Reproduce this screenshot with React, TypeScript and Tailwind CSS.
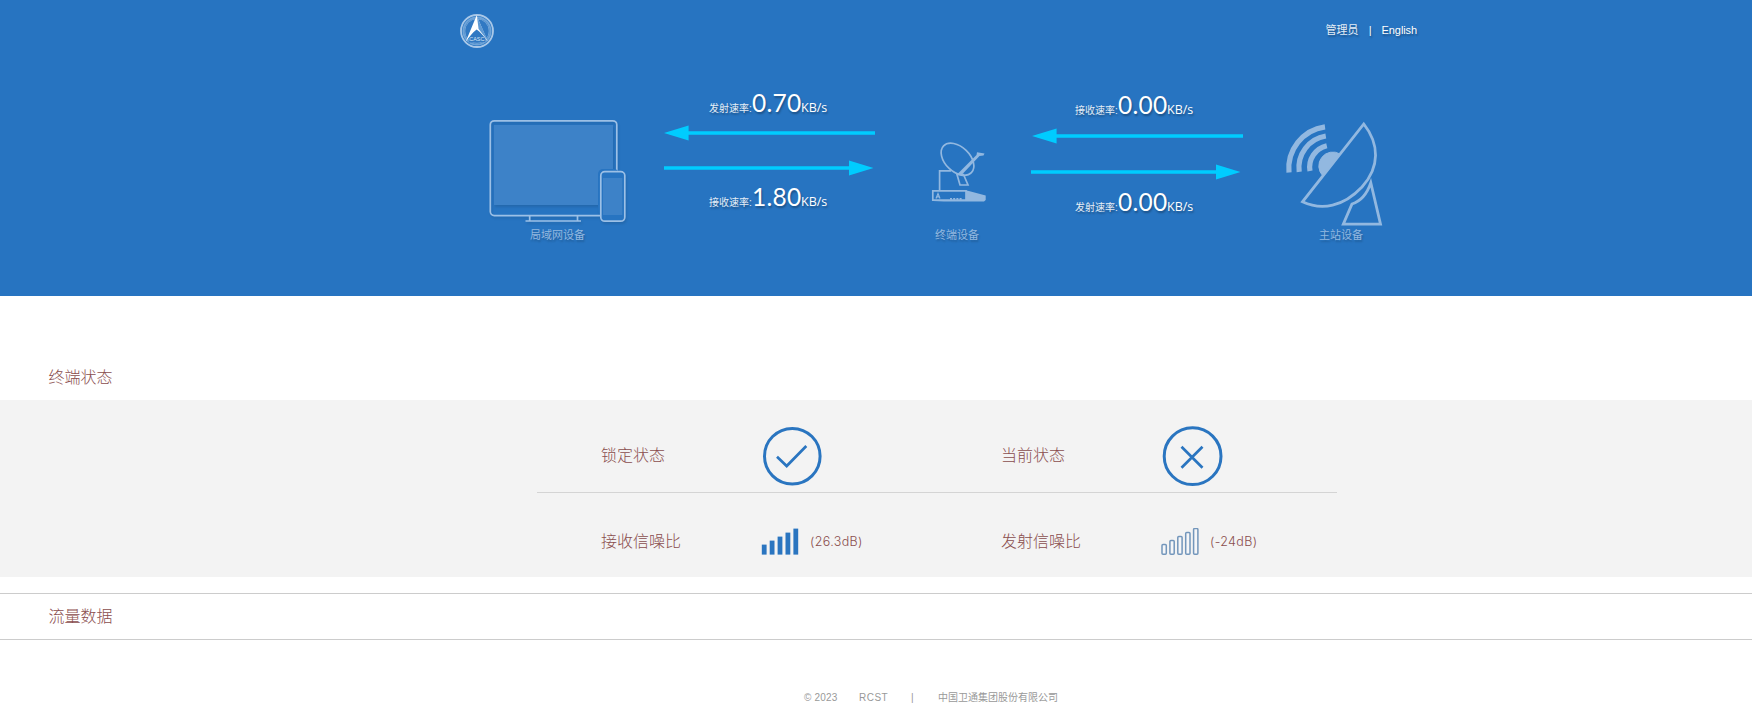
import React from "react";

const LINE = "#92b8e0";
const BLUE = "#2774c1";

function Logo() {
  return (
    <svg width="36" height="36" viewBox="0 0 36 36" className="mt-px block">
      <circle cx="18" cy="18" r="16" fill="none" stroke="#a9c8e8" strokeWidth="1.8" />
      <circle cx="18" cy="18" r="13.6" fill="none" stroke="#6fa4d8" strokeWidth="2" />
      <circle cx="18" cy="18" r="12.2" fill="#3179c3" stroke="#8db6e0" strokeWidth="0.7" />
      <path d="M17.6 2.5 L6.6 29 Q13 20 17.6 16.6 Q22 19.5 28.8 28.5 Z" fill="#ffffff" />
      <path d="M17.6 19.2 Q12.4 22.5 9.4 29.6 L26.6 29 Q22.5 22 17.6 19.2 Z" fill="#3179c3" />
      <path d="M18 3.6 L19.6 16 L29 28 Z" fill="#5f9ad4" />
      <text x="17.8" y="27.8" textAnchor="middle" fontSize="5.4" fill="#dbe8f6" fontFamily="Liberation Sans, sans-serif">
        CASC
      </text>
    </svg>
  );
}

function LanDevice() {
  return (
    <svg width="160" height="116" viewBox="480 110 160 116" className="block drop-shadow-[1px_2px_1px_rgba(0,0,0,0.1)]" fill="none" stroke="#9cc0e6" strokeWidth="1.7">
      <rect x="490.3" y="120.8" width="126.5" height="94.8" rx="4" />
      <rect x="494" y="125" width="119" height="80" fill="#3d82c8" stroke="none" />
      <path d="M529.7 216 V221 M577.5 216 V221 M525.5 221 H581" />
      <rect x="598" y="169" width="21" height="46" rx="5" fill={BLUE} stroke="none" />
      <rect x="600.8" y="171.6" width="24" height="49.6" rx="4" fill={BLUE} />
      <rect x="603" y="178" width="19.3" height="37" fill="#3d82c8" stroke="none" />
    </svg>
  );
}

function Terminal() {
  return (
    <svg width="60" height="66" viewBox="930 138 60 66" className="block" fill="none" stroke={LINE} strokeWidth="1.7">
      <ellipse cx="957.5" cy="158.3" rx="19.3" ry="12.4" transform="rotate(44 957.5 158.3)" />
      <path d="M957 173.5 L976.5 154 L977 151.3 L984.5 152.5 L983.5 154.5 L979.5 155 L962 173.5 Z" fill={LINE} stroke="none" />
      <path d="M957 173.5 L963.5 173.5 L968 184 H960 Z" />
      <path d="M951 169.8 H939.6 V190" />
      <path d="M932.8 189.8 H966 V199.2 H932.8 Z" />
      <path d="M966 189.2 L985.7 194.5 V199 L984 200.6 H933 L966 199 Z" fill={LINE} stroke="none" />
      <path d="M936 197.5 L938 192.5 L940 197.5 M937 195.8 H939.2" strokeWidth="1.2" />
      <path d="M950 197.8 H962" strokeDasharray="2 1.2" />
    </svg>
  );
}

function Station() {
  return (
    <svg width="104" height="108" viewBox="1282 120 104 108" className="block" fill="none" stroke={LINE} strokeWidth="2.8">
      <path d="M1363.8 124 C1379.5 144 1380 167 1362 187 C1343.5 206.5 1322 211 1302.5 201.8 Z" />
      <path d="M1340 154 A14 14 0 0 0 1323 176 Z" fill={LINE} stroke={LINE} strokeWidth="1" />
      <path d="M1289 172.5 A42 42 0 0 1 1325 126.8" strokeWidth="5.2" />
      <path d="M1299.2 171.8 A32 32 0 0 1 1325.8 136" strokeWidth="5.2" />
      <path d="M1310 171 A22 22 0 0 1 1326.8 145.7" strokeWidth="5.2" />
      <path d="M1370.8 182.8 L1380.5 224.2 H1343.3 L1352 204 C1360 201.5 1366.5 195.5 1370.8 182.8 Z" />
    </svg>
  );
}

function Arrow({ dir }: { dir: "left" | "right" }) {
  return (
    <svg width="212" height="16" viewBox="0 0 212 16" className="block">
      <path
        d={dir === "left" ? "M0 8 L24.6 0.4 V6.3 H211 V9.7 H24.6 V15.6 Z" : "M0 6.3 H185 V0.4 L209.5 8 L185 15.6 V9.7 H0 Z"}
        fill="#00ccff"
      />
    </svg>
  );
}

function Rate({ label, value }: { label: string; value: string }) {
  return (
    <div className="flex h-[28px] items-baseline pl-[45px] leading-[28px] whitespace-nowrap text-white [text-shadow:1px_2px_2px_rgba(0,0,0,0.3)]">
      <span className="w-[43px] text-[10px] text-[#e4eef8]">{label}:</span>
      <span className="w-[49px] [font-family:Lato,sans-serif] text-[24.5px] tracking-[0.3px]">{value}</span>
      <span className="[font-family:'Open_Sans',sans-serif] text-[12.5px]">KB/s</span>
    </div>
  );
}

function DeviceLabel({ children }: { children: React.ReactNode }) {
  return (
    <div className="text-[11px] leading-4 whitespace-nowrap text-[#92b8e0] [text-shadow:1px_2px_2px_rgba(0,0,0,0.2)]">
      {children}
    </div>
  );
}

function StatusCell({ label, children }: { label: string; children: React.ReactNode }) {
  return (
    <div className="flex items-center pl-16">
      <div className="w-[160px] text-[16px] font-light">{label}</div>
      {children}
    </div>
  );
}

function RoundIcon({ ok }: { ok: boolean }) {
  return (
    <svg width="62" height="62" viewBox="0 0 62 62" className="block" fill="none" stroke="#2a75c0" strokeWidth="3">
      {ok ? <circle cx="31.3" cy="31.2" r="27.8" /> : <circle cx="31.6" cy="31.2" r="28.4" />}
      {ok ? (
        <path d="M16 31.8 L25.7 41 L45.3 21" strokeWidth="2.7" />
      ) : (
        <path d="M20.5 21.7 L41.5 42.7 M41.5 21.7 L20.5 42.7" strokeWidth="2.7" />
      )}
    </svg>
  );
}

function Signal({ full }: { full: boolean }) {
  const heights = [10, 14, 18, 22, 26];
  return (
    <svg width="38" height="28" viewBox="0 0 38 28" className="block">
      {heights.map((h, i) =>
        full ? (
          <rect key={h} x={0.8 + i * 7.9} y={26.6 - h} width="4.8" height={h} fill="#2a75c0" />
        ) : (
          <rect key={h} x={1 + i * 7.9} y={26.6 - h} width="4.3" height={h - 0.4} rx="1" fill="#f5f6f8" stroke="#7396bb" strokeWidth="1.5" />
        ),
      )}
    </svg>
  );
}

function Decibel({ children }: { children: React.ReactNode }) {
  return (
    <span className="pl-[11px] [font-family:Inter,sans-serif] text-[12.5px] font-light tracking-[0.35px]">{children}</span>
  );
}

export default function App() {
  return (
    <div className="h-[718px] w-[1752px] overflow-hidden bg-white [font-family:'Liberation_Sans','Noto_Sans_CJK_SC',sans-serif]">
      <header className="h-[296px] bg-[#2774c1]">
        <div className="flex h-[60px] items-center justify-between pr-[335px] pl-[459px]">
          <Logo />
          <div className="flex items-center text-[11px] text-white [text-shadow:1px_2px_2px_rgba(0,0,0,0.3)]">
            <span className="text-[#e4eef8]">管理员</span>
            <span className="w-[23px] text-center">|</span>
            <span className="tracking-[-0.1px]">English</span>
          </div>
        </div>
        <div className="flex items-start pl-[480px]">
          <div className="flex w-[184px] flex-col pt-[50px]">
            <LanDevice />
            <div className="pl-[50px] pt-px">
              <DeviceLabel>局域网设备</DeviceLabel>
            </div>
          </div>
          <div className="w-[268px] pt-[29px]">
            <Rate label="发射速率" value="0.70" />
            <div className="h-2" />
            <Arrow dir="left" />
            <div className="h-[19px]" />
            <Arrow dir="right" />
            <div className="h-[7px]" />
            <Rate label="接收速率" value="1.80" />
          </div>
          <div className="w-[99px] pt-[78px]">
            <div className="-ml-0.5 pt-px">
              <Terminal />
            </div>
            <div className="pl-[3px] pt-[22px]">
              <DeviceLabel>终端设备</DeviceLabel>
            </div>
          </div>
          <div className="w-[251px] pt-[31px]">
            <div className="-ml-px">
              <Rate label="接收速率" value="0.00" />
            </div>
            <div className="h-[9px]" />
            <div className="pl-px">
              <Arrow dir="left" />
            </div>
            <div className="h-5" />
            <Arrow dir="right" />
            <div className="h-2" />
            <div className="-ml-px">
              <Rate label="发射速率" value="0.00" />
            </div>
          </div>
          <div className="pt-[60px]">
            <Station />
            <div className="-mt-px pl-[37px]">
              <DeviceLabel>主站设备</DeviceLabel>
            </div>
          </div>
        </div>
      </header>

      <main className="text-[#8a4d4d]">
        <h2 className="flex h-[104px] items-end pb-[10px] pl-[48.5px] text-[16px] leading-6 font-light">终端状态</h2>
        <section className="h-[177px] bg-[#f3f3f3] pl-[537px]">
          <div className="grid h-[93px] w-[800px] grid-cols-[400px_400px] border-b border-[#d4d4d4] pt-[20px]">
            <StatusCell label="锁定状态">
              <RoundIcon ok />
            </StatusCell>
            <StatusCell label="当前状态">
              <RoundIcon ok={false} />
            </StatusCell>
          </div>
          <div className="grid h-[84px] w-[800px] grid-cols-[400px_400px] pt-[14px]">
            <StatusCell label="接收信噪比">
              <Signal full />
              <Decibel>(26.3dB)</Decibel>
            </StatusCell>
            <StatusCell label="发射信噪比">
              <Signal full={false} />
              <Decibel>(-24dB)</Decibel>
            </StatusCell>
          </div>
        </section>
        <h2 className="mt-4 flex h-[47px] items-center border-y border-[#ccc] pl-[48.5px] text-[16px] font-light">流量数据</h2>
      </main>

      <footer className="flex h-[115px] items-center pl-[804px] text-[10px] text-[#999] whitespace-nowrap">
        <span className="w-[55px] tracking-[0.2px]">© 2023</span>
        <span className="w-[52px] tracking-[0.5px]">RCST</span>
        <span className="w-[27px]">|</span>
        <span>中国卫通集团股份有限公司</span>
      </footer>
    </div>
  );
}
